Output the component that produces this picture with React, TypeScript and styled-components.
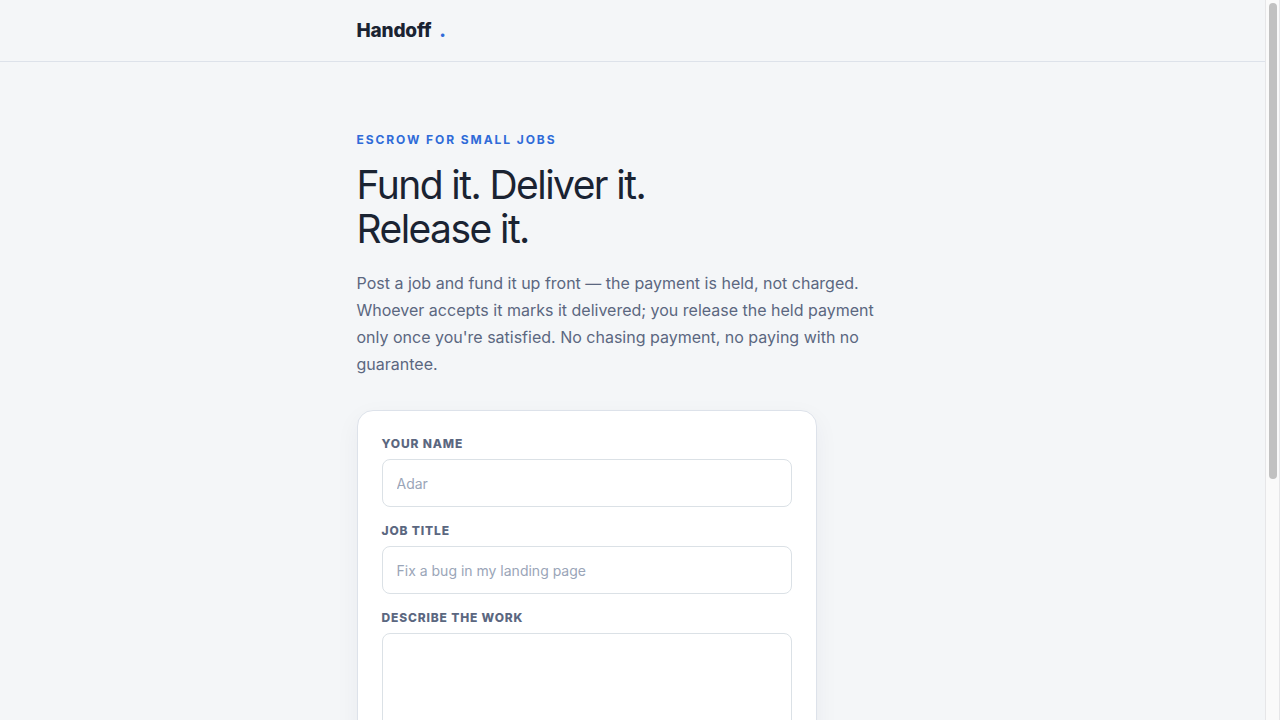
import React from 'react';
import styled, { createGlobalStyle } from 'styled-components';

const colors = {
  page: '#f4f6f8',
  ink: '#1a2332',
  muted: '#5b6780',
  placeholder: '#9aa5b8',
  accent: '#2f6bd8',
  line: '#dde2ea',
  field: '#dbe1e6',
};

const GlobalStyle = createGlobalStyle`
  *, *::before, *::after { box-sizing: border-box; }
  body {
    margin: 0;
    background: ${colors.page};
    color: ${colors.ink};
    font-family: Inter, "Liberation Sans", sans-serif;
  }
`;

const Shell = styled.div`
  display: flex;
  height: 100vh;
`;

const Scroller = styled.div`
  flex: 1;
  min-width: 0;
  overflow-y: auto;
  scrollbar-width: none;
`;

const ScrollTrack = styled.div`
  flex: none;
  width: 15px;
  padding: 3px 2px;
  background: #fafafa;
  border: solid #e6e6e8;
  border-width: 0 1px;
`;

const ScrollThumb = styled.div`
  width: 8px;
  height: calc(100% * 2 / 3);
  margin: 0 auto;
  border-radius: 4px;
  background: #c1c1c1;
`;

const TopBar = styled.header`
  border-bottom: 1px solid ${colors.line};
`;

const Column = styled.div`
  max-width: 600px;
  margin: 0 auto;
  padding: 0 24px;
`;

const Brand = styled.a`
  display: inline-flex;
  gap: 8px;
  padding: 19px 0 18px;
  color: ${colors.ink};
  font-size: 19px;
  font-weight: 800;
  line-height: 24px;
  letter-spacing: -0.01em;
  text-decoration: none;
`;

const BrandDot = styled.span`
  color: ${colors.accent};
`;

const Hero = styled.main`
  padding: 68px 0 64px;
`;

const Eyebrow = styled.p`
  margin: 0 0 13px;
  color: ${colors.accent};
  font-size: 12px;
  font-weight: 700;
  line-height: 20px;
  letter-spacing: 0.16em;
  text-transform: uppercase;
`;

const Title = styled.h1`
  margin: 0 0 19px;
  font-size: 39px;
  font-weight: 400;
  line-height: 44px;
  letter-spacing: -0.04em;
`;

const Lede = styled.p`
  max-width: 520px;
  margin: 0 0 32px;
  color: ${colors.muted};
  font-size: 16px;
  line-height: 27px;
`;

const Card = styled.form`
  display: grid;
  gap: 15px;
  max-width: 460px;
  padding: 24px;
  background: #fff;
  border: 1px solid ${colors.line};
  border-radius: 16px;
  box-shadow: 0 8px 24px rgba(26, 35, 80, 0.05);
`;

const Field = styled.div`
  display: grid;
  gap: 6px;
`;

const Label = styled.label`
  color: ${colors.muted};
  font-size: 12px;
  font-weight: 800;
  line-height: 18px;
  letter-spacing: 0.07em;
  text-transform: uppercase;
`;

const TextInput = styled.input`
  width: 100%;
  height: 48px;
  padding: 0 14px;
  color: ${colors.ink};
  font: inherit;
  font-size: 14px;
  background: #fff;
  border: 1px solid ${colors.field};
  border-radius: 8px;

  &::placeholder { color: ${colors.placeholder}; }
`;

const TextArea = styled(TextInput).attrs({ as: 'textarea' })`
  height: 120px;
  padding: 12px 14px;
  resize: none;
`;

export default function App() {
  return (
    <>
      <GlobalStyle />
      <Shell>
        <Scroller>
          <TopBar>
            <Column>
              <Brand href="#">
                Handoff<BrandDot>.</BrandDot>
              </Brand>
            </Column>
          </TopBar>
          <Column>
            <Hero>
              <Eyebrow>Escrow for small jobs</Eyebrow>
              <Title>
                Fund it. Deliver it.
                <br />
                Release it.
              </Title>
              <Lede>
                Post a job and fund it up front — the payment is held, not charged. Whoever accepts it marks it
                delivered; you release the held payment only once you're satisfied. No chasing payment, no paying with
                no guarantee.
              </Lede>
              <Card>
                <Field>
                  <Label htmlFor="name">Your name</Label>
                  <TextInput id="name" placeholder="Adar" />
                </Field>
                <Field>
                  <Label htmlFor="title">Job title</Label>
                  <TextInput id="title" placeholder="Fix a bug in my landing page" />
                </Field>
                <Field>
                  <Label htmlFor="work">Describe the work</Label>
                  <TextArea id="work" />
                </Field>
              </Card>
            </Hero>
          </Column>
        </Scroller>
        <ScrollTrack aria-hidden="true">
          <ScrollThumb />
        </ScrollTrack>
      </Shell>
    </>
  );
}
